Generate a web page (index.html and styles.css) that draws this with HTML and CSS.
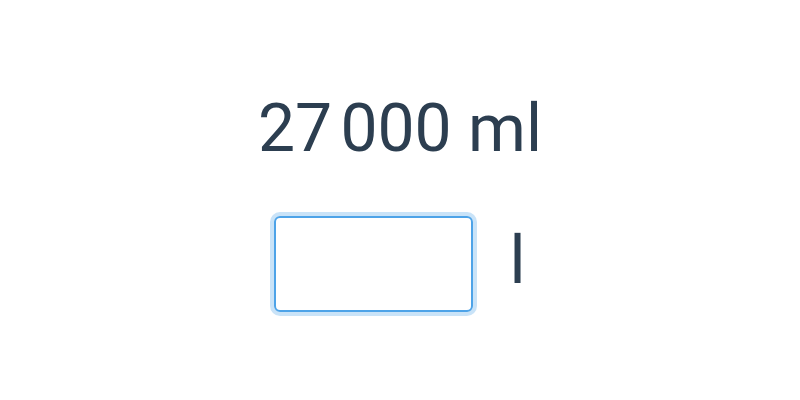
FILE: index.html
```html
<!DOCTYPE html>
<html lang="en">
<head>
  <meta charset="UTF-8">
  <title>Volume</title>
  <link rel="stylesheet" href="styles.css">
</head>
<body>
  <div class="converter">
    <div class="amount">27&#8239;000 ml</div>
    <div class="answer-row">
      <input type="text" class="answer">
      <span class="unit">l</span>
    </div>
  </div>
</body>
</html>
```

FILE: styles.css
```css
body {
  margin: 0;
  background-color: #fff;
  color: #2c3e50;
  font-family: Roboto, "Noto Sans", sans-serif;
}

.converter {
  display: flex;
  flex-direction: column;
  align-items: center;
  padding-top: 89px;
}

.amount {
  font-size: 66px;
  line-height: 80px;
}

.answer-row {
  display: flex;
  align-items: center;
  gap: 36px;
  margin-top: 47px;
  padding-bottom: 10px;
}

.answer {
  box-sizing: border-box;
  width: 199px;
  height: 96px;
  border: 2px solid #4da3e8;
  border-radius: 6px;
  outline: 4px solid rgba(77, 163, 232, 0.3);
  outline-offset: 0;
  font-size: 40px;
  font-family: inherit;
  color: inherit;
  padding: 0 12px;
}

.unit {
  font-size: 66px;
  line-height: 80px;
  margin-top: -6px;
}
```
